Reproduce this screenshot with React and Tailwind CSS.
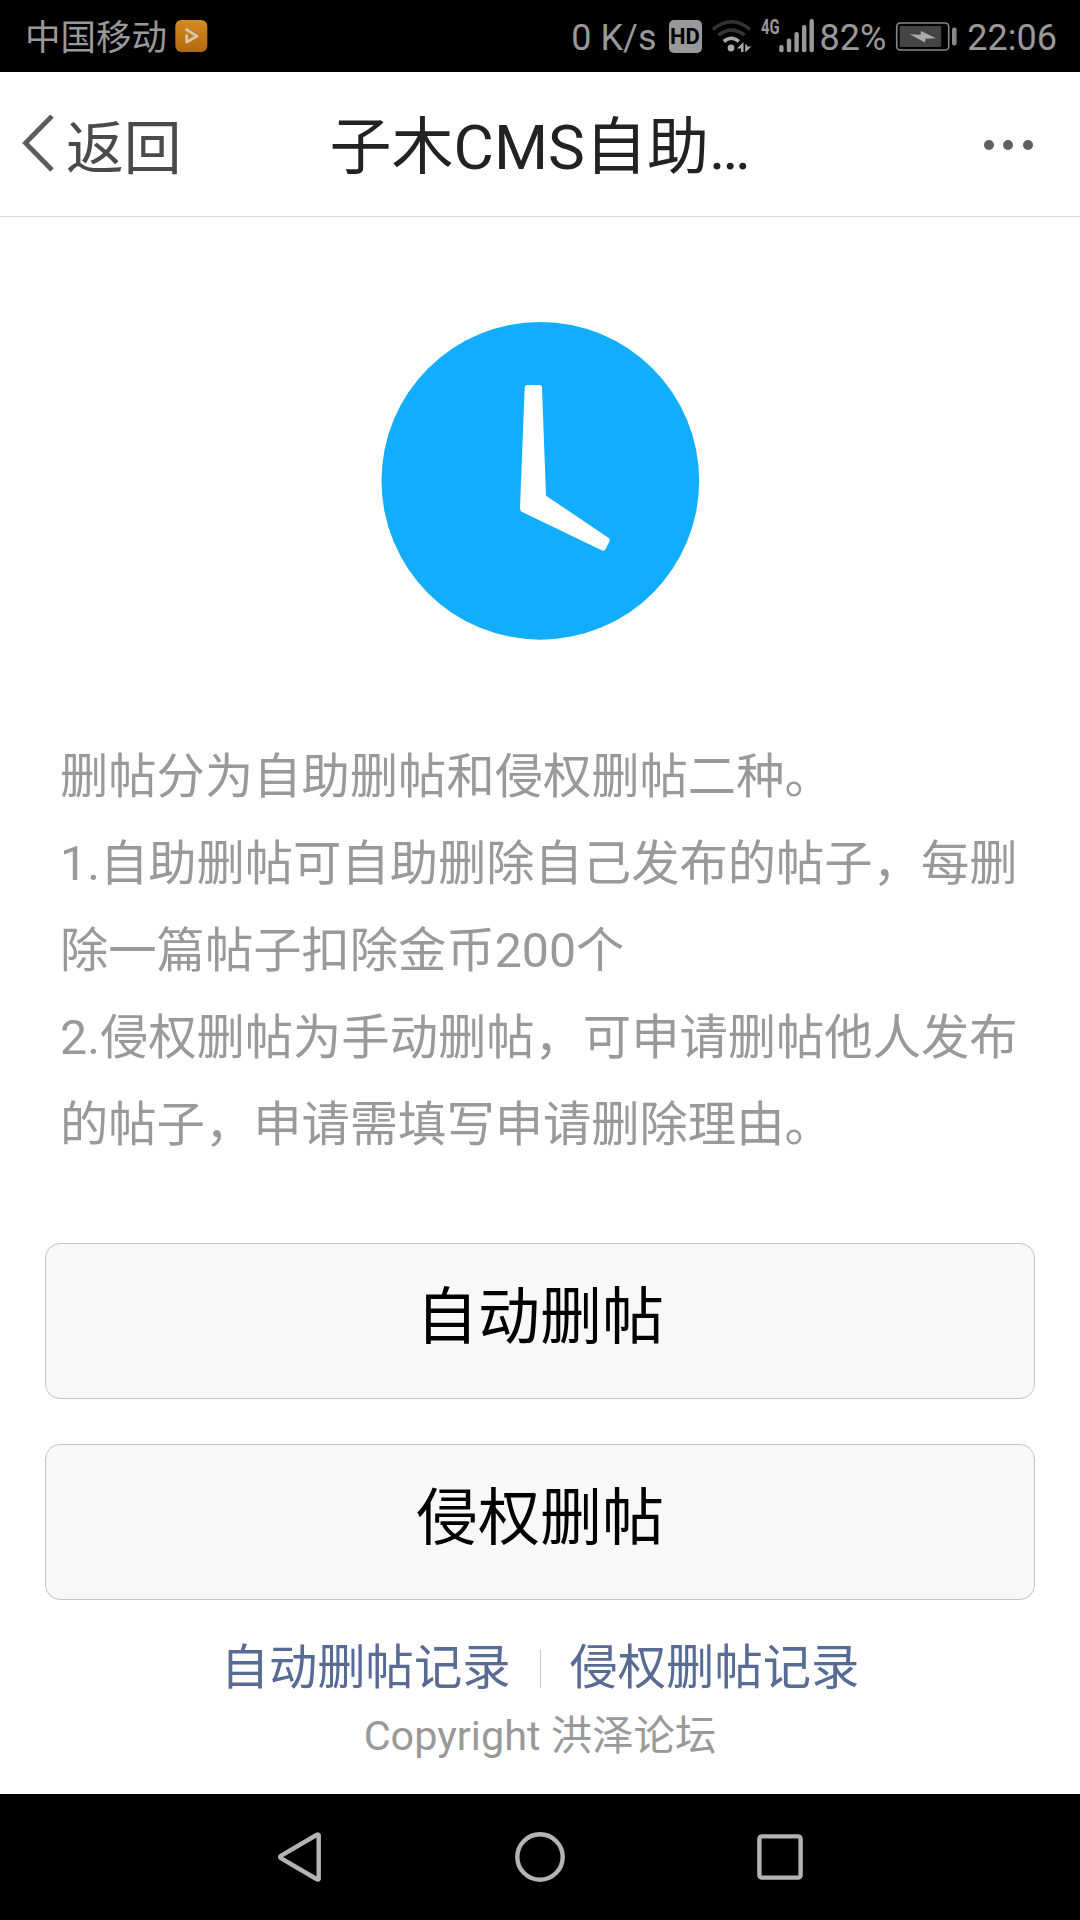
function StatusBar() {
  return (
    <div className="flex h-[72px] items-center bg-black pl-[25px] pr-[23px] text-[#999] text-[36px] leading-[42px]">
      <span className="pt-[4px] text-[35.5px]">中国移动</span>
      <svg className="ml-[8px] shrink-0" width="33" height="34" viewBox="0 0 33 34">
        <defs>
          <linearGradient id="app" x1="0" y1="0" x2="0" y2="1">
            <stop offset="0" stopColor="#d48a24" />
            <stop offset="1" stopColor="#b06a0c" />
          </linearGradient>
        </defs>
        <rect x="0.3" y="1" width="32" height="32" rx="6" fill="url(#app)" />
        <path d="M10.5 10 L22 17.2 L11.7 23 L11.7 15.5" fill="none" stroke="#d8c7a8" strokeWidth="2.7" strokeLinejoin="round" />
      </svg>
      <span className="ml-auto pt-[3px]">0 K/s</span>
      <span className="ml-[12px] flex h-[33px] w-[33px] shrink-0 items-center justify-center rounded-[5px] bg-[#999] pt-[2px] font-[Roboto,sans-serif] text-[22px] leading-none font-bold text-black">HD</span>
      <svg className="ml-[9px] shrink-0" width="104" height="40" viewBox="711 16 104 40">
        <g fill="none" strokeWidth="3.6">
          <path d="M713 29.5 Q731.5 14 750 29.5" stroke="#333" />
          <path d="M718.5 35.2 Q731.5 25 744.5 35.2" stroke="#333" />
          <path d="M723.8 41.5 Q731.5 35 738.8 41.5" stroke="#aaa" />
        </g>
        <g fill="#aaa">
          <circle cx="731" cy="48" r="3.4" />
          <path d="M737 48.5 L743.5 42 L743.5 52 L741 52 L741 48.5 Z" />
          <path d="M745.2 44.5 L747 44.5 L747 46.5 L751.4 46.5 L745.2 52.5 Z" />
        </g>
        <text x="761" y="34" fill="#999" fontSize="20.5" fontWeight="700" textLength="18.5" lengthAdjust="spacingAndGlyphs" fontFamily="Roboto">4G</text>
        <g fill="#999">
          <rect x="779.2" y="45" width="4.4" height="7.3" rx="2" />
          <rect x="786.8" y="38.5" width="4.4" height="13.8" rx="2" />
          <rect x="794.4" y="32" width="4.4" height="20.3" rx="2" />
          <rect x="802" y="25" width="4.4" height="27.3" rx="2" />
          <rect x="809.5" y="19" width="4.4" height="33.3" rx="2" />
        </g>
      </svg>
      <span className="ml-[5px] pt-[3px]">82%</span>
      <svg className="ml-[9px] shrink-0" width="62" height="32" viewBox="895 20 62 32">
        <rect x="896.7" y="23" width="52" height="27" rx="3.5" fill="none" stroke="#888" strokeWidth="1.6" />
        <rect x="899.7" y="26" width="41.5" height="21" rx="1" fill="#444" />
        <path d="M909.7 34.3 L920.5 34.8 L921 31 L936 38.3 L925.5 38.7 L925 42.5 Z" fill="#aaa" />
        <rect x="952" y="27.5" width="4.6" height="18" rx="2" fill="#888" />
      </svg>
      <span className="ml-[10px] pt-[3px]">22:06</span>
    </div>
  );
}

function Header() {
  return (
    <header className="grid h-[145px] grid-cols-[1fr_auto_1fr] items-center border-b border-[#dadada] bg-white">
      <div className="flex items-center pl-[22px] text-[#4a4a4a]">
        <svg width="33" height="58" viewBox="0 0 33 58" className="shrink-0">
          <path d="M30 1 L3.5 28 L30 55" fill="none" stroke="#5c5c5c" strokeWidth="4.8" />
        </svg>
        <span className="ml-[11px] pt-[9px] text-[57.8px] leading-[68px]">返回</span>
      </div>
      <h1 className="pt-[8px] text-[62px] leading-[72px] text-[#222]">子木CMS自助…</h1>
      <div className="flex justify-end gap-[9.5px] pr-[47.5px] pt-px">
        <i className="size-[10px] rounded-full bg-[#606060]" />
        <i className="size-[10px] rounded-full bg-[#606060]" />
        <i className="size-[10px] rounded-full bg-[#606060]" />
      </div>
    </header>
  );
}

function Clock() {
  return (
    <svg className="mx-auto mt-[83px] block" width="360" height="360" viewBox="0 0 1080 1080">
      <circle cx="541" cy="542.5" r="476.5" fill="#12adff" />
      <path
        d="M503 255 H538 Q546 255 546 264 L558 587 L745 713 Q752 718 748 725 L737 747 Q733 755 725 751 L488 637 Q480 633 480 625 L494 264 Q494 255 503 255 Z"
        fill="#fff"
      />
    </svg>
  );
}

function ActionButton({ children }) {
  return (
    <button className="flex h-[156px] w-full items-start justify-center rounded-[15px] border-[1.5px] border-[#c4c4c4] bg-[#f8f8f8] pt-[38px] text-[62px] leading-[72px] text-black">
      {children}
    </button>
  );
}

function NavBar() {
  return (
    <nav className="flex h-[126px] items-center justify-center gap-[190px] bg-black">
      <svg width="50" height="52" viewBox="0 0 50 52" fill="none" stroke="#b4b4b4" strokeWidth="4.4" strokeLinejoin="round">
        <path d="M43.7 4 V48 Q43 49 41.5 48 L6.2 27.3 Q4 26 6.2 24.7 L41.5 4 Q43 3 43.7 4 Z" />
      </svg>
      <svg width="50" height="52" viewBox="0 0 50 52" fill="none" stroke="#b4b4b4" strokeWidth="4.4">
        <circle cx="25" cy="26" r="22.7" />
      </svg>
      <svg width="50" height="52" viewBox="0 0 50 52" fill="none" stroke="#b4b4b4" strokeWidth="4.4">
        <rect x="4.4" y="5.4" width="41.2" height="41.2" rx="2.5" />
      </svg>
    </nav>
  );
}

export default function App() {
  return (
    <div className="flex h-[1920px] w-[1080px] flex-col overflow-hidden bg-white font-[Roboto,'Noto_Sans_CJK_SC',sans-serif] whitespace-nowrap">
      <StatusBar />
      <Header />
      <main className="flex-1">
        <Clock />
        <div className="mt-[73px] pl-[60px] text-[48.3px] leading-[87px] text-[#999]">
          <p>删帖分为自助删帖和侵权删帖二种。</p>
          <p>
            1.自助删帖可自助删除自己发布的帖子，每删
            <br />
            除一篇帖子扣除金币200个
          </p>
          <p>
            2.侵权删帖为手动删帖，可申请删帖他人发布
            <br />
            的帖子，申请需填写申请删除理由。
          </p>
        </div>
        <div className="mt-[75px] flex flex-col gap-[45px] px-[45px]">
          <ActionButton>自动删帖</ActionButton>
          <ActionButton>侵权删帖</ActionButton>
        </div>
        <div className="mt-[36px] flex items-center justify-center text-[48.3px] leading-[64px] text-[#576b95]">
          <a>自动删帖记录</a>
          <span className="mr-[29px] ml-[29px] h-[39px] w-px bg-[#c8c8c8]" />
          <a>侵权删帖记录</a>
        </div>
        <p className="mt-[6px] text-center text-[41.4px] leading-[60px] text-[#999]">Copyright 洪泽论坛</p>
      </main>
      <NavBar />
    </div>
  );
}
